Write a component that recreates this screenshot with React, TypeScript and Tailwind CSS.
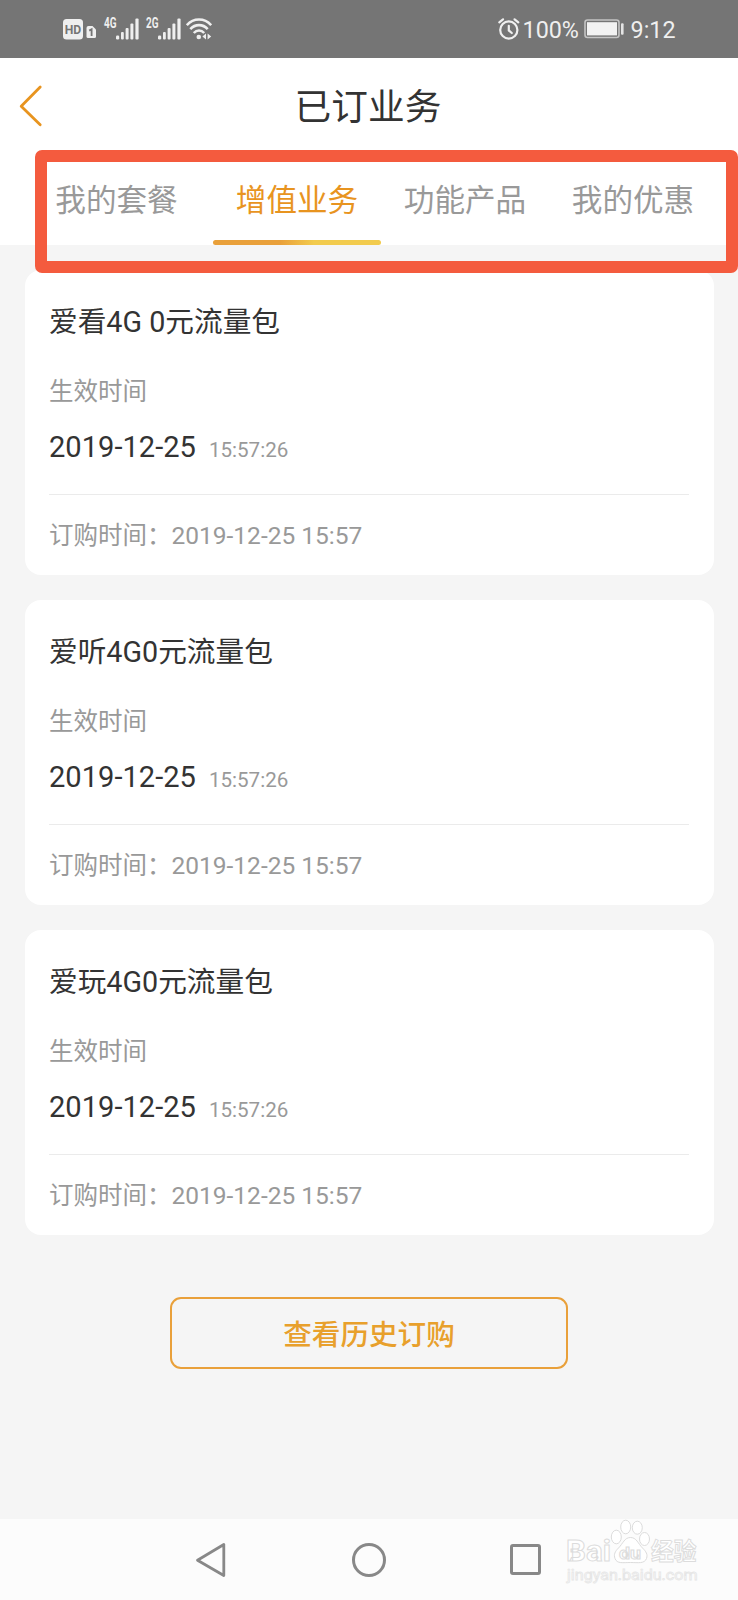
// Subscribed services page: status bar, header with tabs, one card per
// subscription, history button and the system navigation bar.

import React from "react";
import clsx from "clsx";


interface Subscription {
  name: string;
  date: string;
  time: string;
  orderedAt: string;
}


const TABS = ["我的套餐", "增值业务", "功能产品", "我的优惠"];
const ACTIVE_TAB = 1;

const SUBSCRIPTIONS: Subscription[] = [
  { name: "爱看4G 0元流量包", date: "2019-12-25", time: "15:57:26", orderedAt: "2019-12-25 15:57" },
  { name: "爱听4G0元流量包", date: "2019-12-25", time: "15:57:26", orderedAt: "2019-12-25 15:57" },
  { name: "爱玩4G0元流量包", date: "2019-12-25", time: "15:57:26", orderedAt: "2019-12-25 15:57" },
];


const HdIcon: React.FC = () => (
  <svg width="34" height="22" viewBox="0 0 34 22" fill="#efefef">
    <rect x="0" y="1" width="20" height="20.5" rx="3.5" />
    <text
      x="10"
      y="16"
      fontSize="13.5"
      fontWeight="700"
      textAnchor="middle"
      textLength="16.5"
      lengthAdjust="spacingAndGlyphs"
      fill="#757575"
    >
      HD
    </text>
    <path d="M25.5 8h4l3.5 3.5v7a1.5 1.5 0 0 1-1.5 1.5H25a1.5 1.5 0 0 1-1.5-1.5V10a2 2 0 0 1 2-2z" />
    <path d="M26.2 12.6l2.4-1.4V18" fill="none" stroke="#757575" strokeWidth="1.8" />
  </svg>
);

const SignalIcon: React.FC<{ label: string }> = ({ label }) => (
  <svg className="overflow-visible" width="36" height="22" viewBox="0 0 36 22" fill="#efefef">
    <text
      x="0"
      y="10.3"
      fontSize="13.8"
      fontWeight="700"
      textLength="12.5"
      lengthAdjust="spacingAndGlyphs"
    >
      {label}
    </text>
    <rect x="12" y="17.5" width="3.2" height="4" rx="1.2" />
    <rect x="17" y="14" width="2.8" height="7.5" rx="1" />
    <rect x="21.6" y="10" width="3" height="11.5" rx="1" />
    <rect x="26.4" y="5.5" width="3" height="16" rx="1" />
    <rect x="31.4" y="0.5" width="3.2" height="21" rx="1" />
  </svg>
);

const WifiIcon: React.FC = () => (
  <svg width="26" height="22" viewBox="0 0 26 22" fill="none" stroke="#efefef" strokeWidth="2.6">
    <path d="M.8 7.2C7.5-.4 18.5-.4 25.2 7.2" />
    <path d="M4.3 11.2c4.8-5.4 12.6-5.4 17.4 0" />
    <path d="M7.8 15c3-3.3 7.4-3.3 10.4 0" />
    <circle cx="12.8" cy="19" r="2.3" fill="#efefef" stroke="none" />
    <path d="M20 15.5v6l-3.6-3zM21.6 15.5v6l3.6-3z" fill="#efefef" stroke="none" />
  </svg>
);

const AlarmIcon: React.FC = () => (
  <svg
    width="22"
    height="22"
    viewBox="0 0 22 22"
    fill="none"
    stroke="#efefef"
    strokeWidth="2.2"
    strokeLinecap="round"
  >
    <circle cx="10.8" cy="12" r="8.6" />
    <path d="M1.3 4.3L5 1.3M20.3 4.3L16.6 1.3M10.8 7.8v4.6l3 2.6" />
  </svg>
);

const BatteryIcon: React.FC = () => (
  <svg width="40" height="20" viewBox="0 0 40 20">
    <rect x="1" y="1" width="34" height="17.5" rx="2.5" fill="none" stroke="#c4c4c4" strokeWidth="1.6" />
    <rect x="3" y="3.2" width="30" height="13.2" fill="#f2f2f2" />
    <rect x="37" y="4.3" width="2.6" height="11.4" rx="1" fill="#e4e4e4" />
  </svg>
);


const StatusBar: React.FC = () => (
  <div className="flex h-[58px] items-center justify-between bg-[#757575] pr-[62.5px] pl-[63px] text-[#efefef]">
    <div className="flex items-center">
      <HdIcon />
      <div className="ml-[7px]"><SignalIcon label="4G" /></div>
      <div className="ml-[6px]"><SignalIcon label="2G" /></div>
      <div className="ml-[4px]"><WifiIcon /></div>
    </div>
    <div className="flex items-center text-[23.3px] leading-7">
      <AlarmIcon />
      <span className="mt-px ml-[3px] w-[57px]">100%</span>
      <div className="ml-[4px]"><BatteryIcon /></div>
      <span className="mt-px ml-[7px]">9:12</span>
    </div>
  </div>
);


const Header: React.FC = () => (
  <header className="relative h-[187px] bg-white">
    <div className="grid h-[92px] grid-cols-3 items-center pt-1">
      <svg
        className="ml-[19px]"
        width="24"
        height="42"
        viewBox="0 0 24 42"
        fill="none"
        stroke="#e8941f"
        strokeWidth="2.8"
        strokeLinecap="round"
        strokeLinejoin="round"
      >
        <path d="M21.2 2L2.2 21.2L21.2 39.8" />
      </svg>
      <h1 className="pt-1 pr-0.5 text-center text-[36.7px] leading-[52px] text-[#333333]">已订业务</h1>
    </div>

    <nav className="flex h-[95px] pr-[21px] pl-[20px]">
      {TABS.map((tab, i) => (
        <div
          key={tab}
          className={clsx(
            "flex flex-col items-center justify-between pt-[29px] text-[30.6px] leading-[44px]",
            i === 0 ? "w-[193px]" : "w-[168px]",
            i === ACTIVE_TAB ? "text-[#e8941f]" : "text-[#999999]",
          )}
        >
          <span>{tab}</span>
          {i === ACTIVE_TAB && (
            <div className="h-[5px] w-full rounded-full bg-linear-to-r from-[#e9a03a] from-40% to-[#f2cb4d] to-60%" />
          )}
        </div>
      ))}
    </nav>

    {/* red marker drawn around the tabs */}
    <div className="absolute top-[92px] left-[35px] h-[123px] w-[703px] rounded-[7px] border-[12.5px] border-[#f45b3e]" />
  </header>
);


const SubscriptionCard: React.FC<{ item: Subscription }> = ({ item }) => (
  <section className="h-[305px] rounded-[16px] bg-white px-[24.5px] pt-[32px]">
    <h2 className="text-[28.7px] leading-10 text-[#333333]">{item.name}</h2>
    <p className="mt-[35px] text-[24.5px] leading-[30px] text-[#999999]">生效时间</p>
    <div className="mt-[22px] flex items-baseline leading-9">
      <span className="text-[29.1px] text-[#333333]">{item.date}</span>
      <span className="ml-[13px] text-[20.6px] text-[#999999]">{item.time}</span>
    </div>
    <hr className="mt-[26px] border-[#ebebeb]" />
    <p className="mt-[26px] text-[24.5px] leading-[30px] text-[#999999]">
      订购时间：{item.orderedAt}
    </p>
  </section>
);


const Watermark: React.FC = () => (
  <svg width="136" height="66" viewBox="0 0 136 66" fill="#ffffff" stroke="#dcdcdc" strokeWidth="1">
    <text x="1" y="42" fontSize="29.5" fontWeight="700" textLength="45" lengthAdjust="spacingAndGlyphs">
      Bai
    </text>
    <ellipse cx="51.3" cy="18" rx="5" ry="6.8" />
    <ellipse cx="60.7" cy="8" rx="5" ry="6.8" />
    <ellipse cx="72.3" cy="8.7" rx="5" ry="6.5" />
    <ellipse cx="79.5" cy="20" rx="5" ry="6.5" />
    <path d="M65.5 18.500c-6 0-7.500 6-12 10.500-3.500 3.500-5 6.500-3.500 10.500 2 5.500 8 4 15.500 4s14 1.500 16-4c1.500-4-.5-7-4-10.500-4.500-4.500-6-10.500-12-10.500z" />
    <text x="54" y="39.5" fontSize="17" fontWeight="700" textLength="22" lengthAdjust="spacingAndGlyphs">
      du
    </text>
    <text x="86" y="41" fontSize="24" fontWeight="700" textLength="45.5" lengthAdjust="spacingAndGlyphs">
      经验
    </text>
    <text
      x="2"
      y="60.5"
      fontSize="14.5"
      textLength="130.5"
      lengthAdjust="spacingAndGlyphs"
      stroke="#e6e6e6"
      strokeWidth="0.8"
    >
      jingyan.baidu.com
    </text>
  </svg>
);

const NavBar: React.FC = () => (
  <footer className="relative h-[81px] bg-[#fcfcfc]">
    <div className="flex h-full items-center pl-[195px]">
      <svg width="32" height="36" viewBox="0 0 32 36" fill="none" stroke="#888888" strokeWidth="2.8" strokeLinejoin="round">
        <path d="M28.8 2.5V33.5L2.5 18.2z" />
      </svg>
      <div className="ml-[125px] h-[34px] w-[34px] rounded-full border-3 border-[#888888]" />
      <div className="ml-[124px] h-[31px] w-[31px] rounded-[3px] border-3 border-[#888888]" />
    </div>
    <div className="absolute top-0 left-[565px]">
      <Watermark />
    </div>
  </footer>
);


export default function App() {
  return (
    <div className="flex h-[1600px] w-[738px] flex-col overflow-hidden bg-[#f5f5f5] font-[Roboto,'Noto_Sans_CJK_SC',sans-serif]">
      <StatusBar />
      <Header />
      <main className="flex flex-1 flex-col gap-[25px] px-[24.5px] pt-[25px]">
        {SUBSCRIPTIONS.map((item) => (
          <SubscriptionCard key={item.name} item={item} />
        ))}
        <button className="mt-[37px] h-[72px] w-[398px] self-center rounded-[11px] border-2 border-[#e9a03a] pt-[4px] text-[28.6px] font-medium text-[#e8a02c]">
          查看历史订购
        </button>
      </main>
      <NavBar />
    </div>
  );
}
